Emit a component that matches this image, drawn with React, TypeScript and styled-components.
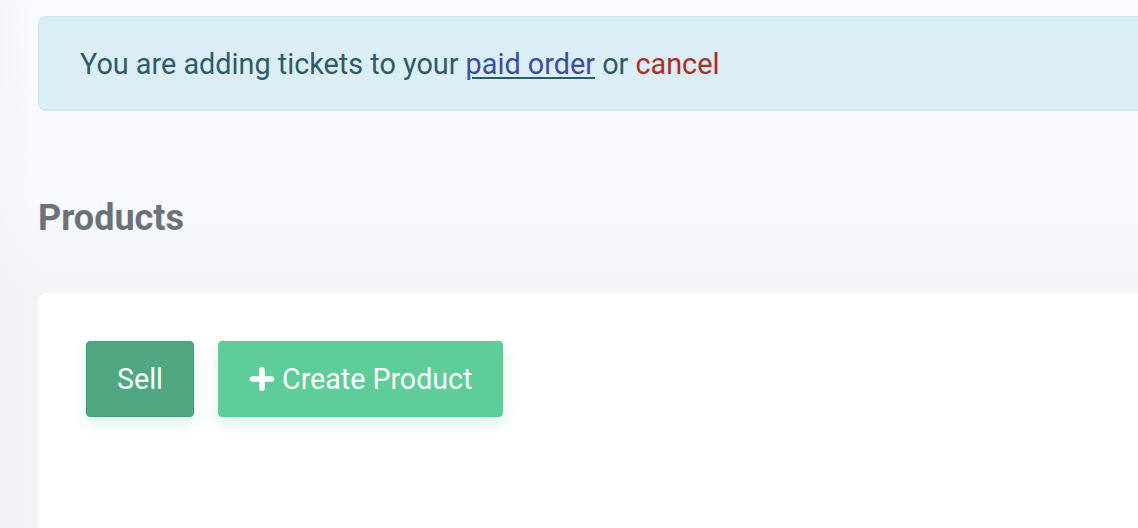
import React from 'react';
import styled, { createGlobalStyle } from 'styled-components';

const GlobalStyle = createGlobalStyle`
  html, body {
    margin: 0;
    padding: 0;
    height: 100%;
  }
  body {
    font-family: Roboto, "Liberation Sans", Arial, sans-serif;
    background: #f8f9fd;
    overflow: hidden;
  }
`;

const Page = styled.div`
  min-height: 528px;
  padding: 16px 0 0 38px;
  box-sizing: border-box;
  background:
    linear-gradient(to right, rgba(238, 240, 245, 0.45) 0px, rgba(238, 240, 245, 0) 38px),
    linear-gradient(to bottom, #fafbff 0px, #f9faff 200px, #f3f4f8 292px, #f3f4f8 100%);
  display: flex;
  flex-direction: column;
`;

const Alert = styled.div`
  background: #dbeef5;
  border: 1px solid #c7e6ef;
  border-right: none;
  border-radius: 8px 0 0 8px;
  padding: 0 0 0 41px;
  height: 93px;
  display: flex;
  align-items: center;
  font-size: 28.8px;
  color: #2f5a6c;
`;

const OrderLink = styled.a`
  color: #3a4e9f;
  text-decoration: underline;
  text-decoration-color: #2f5a6c;
  text-decoration-thickness: 2px;
  text-underline-offset: 3px;
`;

const CancelLink = styled.a`
  color: #a83029;
  text-decoration: none;
`;

const Heading = styled.h2`
  margin: 86px 0 0;
  font-size: 36px;
  font-weight: 700;
  color: #6b727a;
  line-height: 42px;
`;

const Card = styled.div`
  margin-top: 54px;
  flex: 1;
  background: #ffffff;
  border-radius: 8px 0 0 0;
  padding: 48px 0 0 48px;
`;

const Toolbar = styled.div`
  display: flex;
  gap: 24px;
`;

const Button = styled.button<{ $variant: 'dark' | 'light' }>`
  height: 76px;
  padding: 0 30px;
  display: flex;
  align-items: center;
  gap: 7px;
  font-family: Roboto, "Liberation Sans", Arial, sans-serif;
  font-size: 28.6px;
  color: #ffffff;
  border-radius: 4px;
  cursor: pointer;
  background: ${(p) => (p.$variant === 'dark' ? '#4fa882' : '#5ecd9a')};
  border: 1px solid ${(p) => (p.$variant === 'dark' ? '#469b76' : '#5ecd9a')};
  box-shadow: 0 6px 14px rgba(94, 205, 154, 0.25);
`;

const PlusIcon = () => (
  <svg width="26" height="24" viewBox="0 0 26 24" aria-hidden="true">
    <path d="M13 2.5v19M3.5 12h19" stroke="#ffffff" strokeWidth="5.5" strokeLinecap="round" />
  </svg>
);

export default function App() {
  return (
    <>
      <GlobalStyle />
      <Page>
        <Alert>
          <span>
            You are adding tickets to your <OrderLink href="#">paid order</OrderLink> or{' '}
            <CancelLink href="#">cancel</CancelLink>
          </span>
        </Alert>
        <Heading>Products</Heading>
        <Card>
          <Toolbar>
            <Button $variant="dark">Sell</Button>
            <Button $variant="light">
              <PlusIcon />
              Create Product
            </Button>
          </Toolbar>
        </Card>
      </Page>
    </>
  );
}
